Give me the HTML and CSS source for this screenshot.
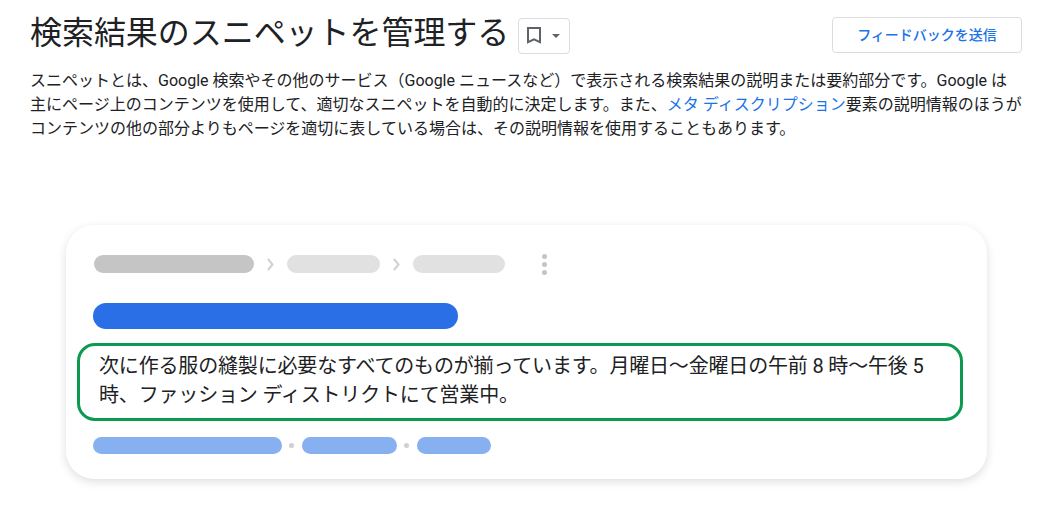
FILE: index.html
```html
<!DOCTYPE html>
<html lang="ja">
<head>
  <meta charset="UTF-8">
  <title>検索結果のスニペットを管理する</title>
  <link rel="stylesheet" href="styles.css">
</head>
<body>
  <div class="page">
    <div class="page-header">
      <div class="title-group">
        <h1 class="page-title">検索結果のスニペットを管理する</h1>
        <button class="bookmark-button">
          <svg class="bookmark-icon" width="14" height="17" viewBox="0 0 14 17">
            <path d="M1 1h12v14.2l-6-2.8-6 2.8z" fill="none" stroke="#5f6368" stroke-width="2"/>
          </svg>
          <span class="caret"></span>
        </button>
      </div>
      <button class="feedback-button">フィードバックを送信</button>
    </div>

    <p class="intro">スニペットとは、Google 検索やその他のサービス（Google ニュースなど）で表示される検索結果の説明または要約部分です。Google は<br>主にページ上のコンテンツを使用して、適切なスニペットを自動的に決定します。また、<a href="#">メタ ディスクリプション</a>要素の説明情報のほうが<br>コンテンツの他の部分よりもページを適切に表している場合は、その説明情報を使用することもあります。</p>

    <div class="result-card">
      <div class="crumbs">
        <span class="bar bar--dark bar--crumb-long"></span>
        <svg class="chevron" width="7" height="13" viewBox="0 0 7 13"><path d="M1 1l4.5 5.5L1 12" fill="none" stroke="#cfd0cf" stroke-width="2"/></svg>
        <span class="bar bar--light bar--crumb"></span>
        <svg class="chevron" width="7" height="13" viewBox="0 0 7 13"><path d="M1 1l4.5 5.5L1 12" fill="none" stroke="#cfd0cf" stroke-width="2"/></svg>
        <span class="bar bar--light bar--crumb"></span>
        <span class="more-dots"><i></i><i></i><i></i></span>
      </div>
      <div class="bar bar--title"></div>
      <div class="snippet">次に作る服の縫製に必要なすべてのものが揃っています。月曜日～金曜日の午前 8 時～午後 5 時、ファッション ディストリクトにて営業中。</div>
      <div class="links">
        <span class="bar bar--link bar--link-a"></span>
        <span class="dot"></span>
        <span class="bar bar--link bar--link-b"></span>
        <span class="dot"></span>
        <span class="bar bar--link bar--link-c"></span>
      </div>
    </div>
  </div>
</body>
</html>
```

FILE: styles.css
```css
/* General styles */
html, body {
  margin: 0;
  background: #fff;
}

body {
  color: #202124;
  font-family: Roboto, "Noto Sans CJK JP", sans-serif;
}

.page {
  width: 1053px;
  height: 524px;
  box-sizing: border-box;
  padding: 12px 31px 0 30px;
  overflow: hidden;
}

/* Header */
.page-header {
  display: flex;
  justify-content: space-between;
  align-items: flex-start;
}

.title-group {
  display: flex;
  align-items: center;
  gap: 9px;
}

.page-title {
  margin: 0;
  font-size: 32px;
  line-height: 42px;
  font-weight: 400;
  letter-spacing: -0.05px;
}

.bookmark-button {
  display: flex;
  align-items: center;
  gap: 11px;
  width: 52px;
  height: 36px;
  margin-top: 5px;
  padding: 0 0 0 8px;
  box-sizing: border-box;
  background: #fff;
  border: 1px solid #dadce0;
  border-radius: 4px;
}

.caret {
  width: 0;
  height: 0;
  border-left: 4px solid transparent;
  border-right: 4px solid transparent;
  border-top: 4px solid #5f6368;
}

.feedback-button {
  width: 190px;
  height: 36px;
  margin-top: 5px;
  padding: 0 0 3px;
  background: #fff;
  border: 1px solid #dadce0;
  border-radius: 4px;
  color: #1a73e8;
  font-family: inherit;
  font-size: 14px;
  font-weight: 500;
}

/* Intro text */
.intro {
  margin: 15px 0 0;
  font-size: 16px;
  line-height: 24px;
  color: #202124;
  white-space: nowrap;
}

.intro a {
  color: #1a73e8;
  text-decoration: none;
}

/* Search result picture */
.result-card {
  width: 921px;
  height: 254px;
  margin: 84px 0 0 36px;
  padding: 30px 24px 0 27px;
  box-sizing: border-box;
  background: #fff;
  border-radius: 28px;
  box-shadow: 0 3px 10px rgba(0,0,0,.13);
}

.bar {
  display: block;
  border-radius: 9px;
}

.crumbs {
  display: flex;
  align-items: center;
  height: 18px;
  margin-left: 1px;
}

.bar--dark {
  background: #c4c5c4;
}

.bar--light {
  background: #e1e1e1;
}

.bar--crumb-long {
  width: 160px;
  height: 18px;
}

.bar--crumb {
  width: 92.5px;
  height: 18px;
}

.chevron {
  margin: 0 13px;
}

.more-dots {
  display: flex;
  flex-direction: column;
  gap: 3px;
  margin-left: 37px;
}

.more-dots i {
  display: block;
  width: 5px;
  height: 5px;
  border-radius: 50%;
  background: #c4c5c4;
}

.bar--title {
  width: 365px;
  height: 26px;
  margin-top: 30px;
  border-radius: 13px;
  background: #2a6fe6;
}

.snippet {
  width: 886px;
  height: 78px;
  margin: 14px 0 0 -16px;
  padding: 6px 20px 0 19px;
  box-sizing: border-box;
  border: 3px solid #0a9a50;
  border-radius: 18px;
  font-size: 20px;
  line-height: 29px;
  letter-spacing: -0.17px;
  color: #202124;
}

.links {
  display: flex;
  align-items: center;
  margin-top: 16px;
}

.bar--link {
  height: 17px;
  background: #87b0f0;
}

.bar--link-a {
  width: 189px;
}

.bar--link-b {
  width: 95px;
}

.bar--link-c {
  width: 74px;
}

.dot {
  width: 5px;
  height: 5px;
  margin: 0 8px 0 7px;
  border-radius: 50%;
  background: #cfd0cf;
}
```
